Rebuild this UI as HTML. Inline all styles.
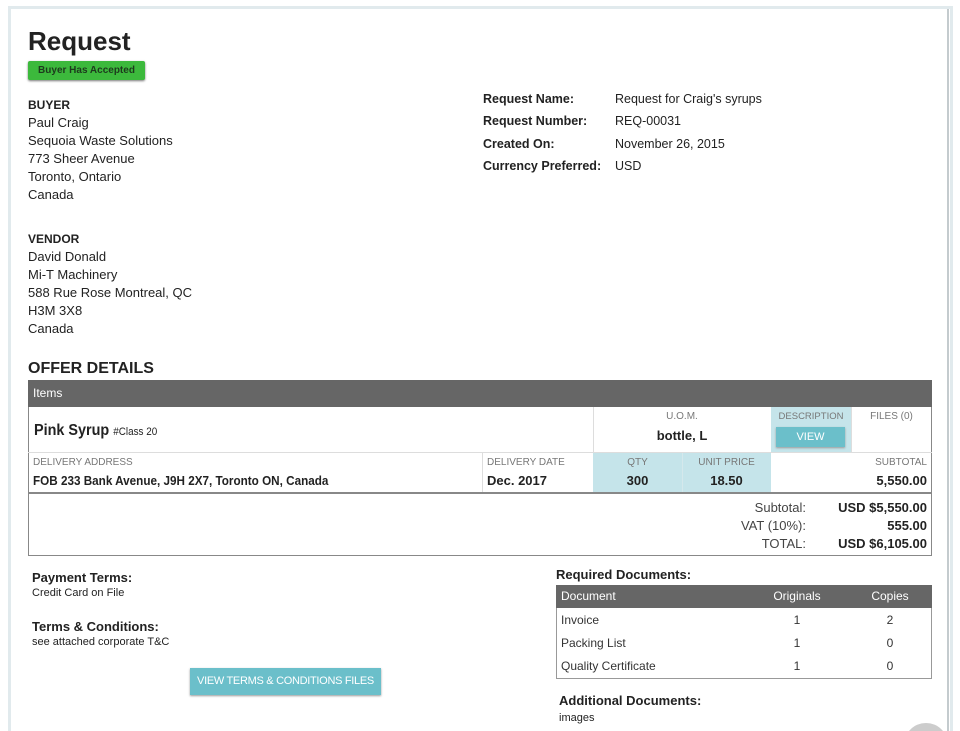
<!DOCTYPE html>
<html><head><meta charset="utf-8"><style>
*{margin:0;padding:0;box-sizing:border-box}
html,body{width:960px;height:731px;overflow:hidden}
body{background:#fff;font-family:"Liberation Sans",sans-serif;color:#222;position:relative}
.card{position:absolute;left:8px;top:6px;width:945px;height:725px;background:#fff;border:3px solid #e1eaed;border-bottom:none}
.card2{position:absolute;left:947px;top:9px;width:2px;height:722px;background:#c4cbce}
.a{position:absolute;white-space:nowrap}
.t{font-size:13px;line-height:18px}
.b{font-weight:bold}
.lbl{font-size:10px;color:#777}
.val{font-size:13px;font-weight:bold}
.sx{transform:scaleX(.9);transform-origin:left top}
</style></head><body>
<div class="card"></div><div class="card2"></div>
<div class="a b" style="left:28px;top:26px;font-size:26px">Request</div>
<div class="a b" style="left:28px;top:61px;width:117px;height:19px;background:#3cb93c;border-radius:2px;box-shadow:0 1px 2px #777;font-size:10px;line-height:19px;text-align:center;color:#1d3a1d">Buyer Has Accepted</div>

<div class="a t" style="left:28px;top:96px"><b style="font-size:12px">BUYER</b><br>Paul Craig<br>Sequoia Waste Solutions<br>773 Sheer Avenue<br>Toronto, Ontario<br>Canada</div>
<div class="a t" style="left:28px;top:230px"><b style="font-size:12px">VENDOR</b><br>David Donald<br>Mi-T Machinery<br>588 Rue Rose Montreal, QC<br>H3M 3X8<br>Canada</div>

<div class="a t b" style="left:483px;top:88px;line-height:22.3px;font-size:12.5px">Request Name:<br>Request Number:<br>Created On:<br>Currency Preferred:</div>
<div class="a t" style="left:615px;top:88px;line-height:22.3px;font-size:12.5px">Request for Craig's syrups<br>REQ-00031<br>November 26, 2015<br>USD</div>

<div class="a b" style="left:28px;top:360px;font-size:16px">OFFER DETAILS</div>

<div class="a" style="left:28px;top:380px;width:904px;height:176px;border:1px solid #888"></div>
<div class="a" style="left:28px;top:380px;width:904px;height:27px;background:#666;color:#fff;font-size:12px;line-height:27px;padding-left:5px">Items</div>
<div class="a" style="left:593px;top:407px;width:1px;height:45px;background:#ddd"></div>
<div class="a" style="left:771px;top:407px;width:80px;height:45px;background:#c5e4ea"></div>
<div class="a" style="left:851px;top:407px;width:1px;height:45px;background:#ddd"></div>
<div class="a b sx" style="left:34px;top:422px;font-size:16px">Pink Syrup <span style="font-weight:normal;font-size:11px">#Class 20</span></div>
<div class="a lbl" style="left:593px;top:411px;width:178px;text-align:center">U.O.M.</div>
<div class="a val" style="left:593px;top:428px;width:178px;text-align:center">bottle, L</div>
<div class="a lbl" style="left:771px;top:411px;width:80px;text-align:center;font-size:9.5px">DESCRIPTION</div>
<div class="a" style="left:776px;top:427px;width:69px;height:20px;background:#6bbfca;color:#fff;font-size:11px;line-height:20px;text-align:center;box-shadow:0 1px 2px #999">VIEW</div>
<div class="a lbl" style="left:851px;top:411px;width:81px;text-align:center">FILES (0)</div>
<div class="a" style="left:28px;top:452px;width:904px;height:1px;background:#ddd"></div>
<div class="a" style="left:593px;top:453px;width:178px;height:40px;background:#c5e4ea"></div>
<div class="a" style="left:482px;top:453px;width:1px;height:40px;background:#ddd"></div>
<div class="a" style="left:682px;top:453px;width:1px;height:40px;background:#d5e8ec"></div>
<div class="a lbl" style="left:33px;top:457px">DELIVERY ADDRESS</div>
<div class="a val sx" style="left:33px;top:473px">FOB 233 Bank Avenue, J9H 2X7, Toronto ON, Canada</div>
<div class="a lbl" style="left:487px;top:457px">DELIVERY DATE</div>
<div class="a val" style="left:487px;top:473px">Dec. 2017</div>
<div class="a lbl" style="left:593px;top:457px;width:89px;text-align:center">QTY</div>
<div class="a val" style="left:593px;top:473px;width:89px;text-align:center">300</div>
<div class="a lbl" style="left:682px;top:457px;width:89px;text-align:center">UNIT PRICE</div>
<div class="a val" style="left:682px;top:473px;width:89px;text-align:center">18.50</div>
<div class="a lbl" style="left:771px;top:457px;width:156px;text-align:right">SUBTOTAL</div>
<div class="a val" style="left:771px;top:473px;width:156px;text-align:right">5,550.00</div>
<div class="a" style="left:28px;top:492px;width:904px;height:2px;background:#888"></div>
<div class="a" style="left:600px;top:499px;width:206px;text-align:right;font-size:13px;line-height:18px;color:#444">Subtotal:<br>VAT (10%):<br>TOTAL:</div>
<div class="a b" style="left:800px;top:499px;width:127px;text-align:right;font-size:13px;line-height:18px">USD $5,550.00<br>555.00<br>USD $6,105.00</div>

<div class="a b" style="left:32px;top:570px;font-size:13px">Payment Terms:</div>
<div class="a" style="left:32px;top:587px;font-size:11px">Credit Card on File</div>
<div class="a b" style="left:32px;top:619px;font-size:13px">Terms &amp; Conditions:</div>
<div class="a" style="left:32px;top:636px;font-size:11px">see attached corporate T&amp;C</div>
<div class="a" style="left:190px;top:668px;width:191px;height:27px;background:#6bbfca;color:#fff;font-size:11px;line-height:27px;text-align:center;box-shadow:0 1px 2px #999;letter-spacing:-.3px">VIEW TERMS &amp; CONDITIONS FILES</div>

<div class="a b" style="left:556px;top:567px;font-size:13px">Required Documents:</div>
<div class="a" style="left:556px;top:585px;width:376px;height:94px;border:1px solid #999"></div>
<div class="a" style="left:556px;top:585px;width:376px;height:23px;background:#666;color:#fff;font-size:12px;line-height:23px"><span style="position:absolute;left:5px">Document</span><span style="position:absolute;left:211px;width:60px;text-align:center">Originals</span><span style="position:absolute;left:305px;width:58px;text-align:center">Copies</span></div>
<div class="a" style="left:556px;top:609px;width:376px;font-size:12px;line-height:23px;color:#333">
<div style="position:relative;height:23px"><span style="position:absolute;left:5px">Invoice</span><span style="position:absolute;left:216px;width:50px;text-align:center">1</span><span style="position:absolute;left:310px;width:48px;text-align:center">2</span></div>
<div style="position:relative;height:23px"><span style="position:absolute;left:5px">Packing List</span><span style="position:absolute;left:216px;width:50px;text-align:center">1</span><span style="position:absolute;left:310px;width:48px;text-align:center">0</span></div>
<div style="position:relative;height:23px"><span style="position:absolute;left:5px">Quality Certificate</span><span style="position:absolute;left:216px;width:50px;text-align:center">1</span><span style="position:absolute;left:310px;width:48px;text-align:center">0</span></div>
</div>
<div class="a b" style="left:559px;top:693px;font-size:13px">Additional Documents:</div>
<div class="a" style="left:559px;top:712px;font-size:11px">images</div>
<div class="a" style="left:904px;top:723px;width:44px;height:8px;overflow:hidden"><div style="width:44px;height:44px;border-radius:50%;background:#ccc"></div></div>
</body></html>
